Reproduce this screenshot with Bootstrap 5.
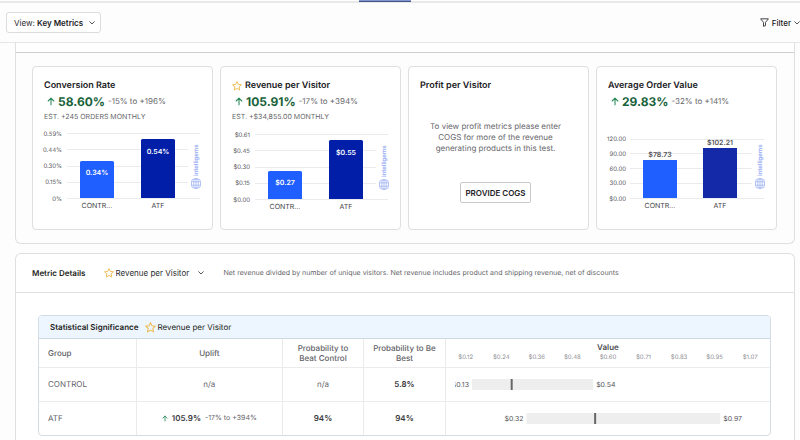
<!DOCTYPE html>
<html lang="en">
<head>
<meta charset="utf-8">
<meta name="viewport" content="width=device-width, initial-scale=1">
<title>Key Metrics</title>
<link href="https://cdn.jsdelivr.net/npm/bootstrap@5.3.0/dist/css/bootstrap.min.css" rel="stylesheet">
<style>
body{font-family:Inter,"Liberation Sans",sans-serif;font-size:8px;line-height:12px;color:#1d1d20;background:#fdfdfd;min-height:100vh;overflow-x:hidden;text-rendering:geometricPrecision}
.tab-strip{height:3px;border-bottom:2px solid #e9e9ea;padding-left:359px}
.tab-strip a{width:52px;height:2px;background:#8296cf;border-bottom:1px solid #43568c}
.toolbar{height:40px;border-bottom:1px solid #e6e6e7;padding-left:6px}
.view-btn{height:21px;width:95px;border:1px solid #dcdce0;border-radius:3px;background:#fff;padding:0 5px 0 7px;font-size:8px;line-height:12px;color:#2b2b2e;white-space:nowrap}
.view-btn b{font-weight:600;color:#1b1b1e}
.filter-btn{border:0;background:none;padding:0;font-size:8px;line-height:12px;color:#1b1b1e;font-weight:500;gap:3px}
.panels{padding:0 5px 0 15px}
.panel{border:1px solid #dfdfe1;background:#fff}
.summary{border-top:0;border-radius:0 0 6px 6px;background:#fdfdfd}
.summary-head{height:10px;background:#fff;border-bottom:1px solid #cfcfd1}
.summary-body{display:grid;grid-template-columns:repeat(4,minmax(0,1fr));gap:7px;padding:13px 17px 13px 16px}
.metric{border:1px solid #dfdfe1;border-radius:4px;background:#fff;height:164px}
.metric-text{padding:11px 11px 0;height:57px;white-space:nowrap}
.metric h2{font-size:9px;line-height:15px;font-weight:600;margin:0;color:#1b1b1e;gap:3px}
.uplift{line-height:17px;padding-left:3px;gap:3px;font-size:8px;color:#66666a}
.uplift strong{font-size:12px;font-weight:700;color:#17623a}
.est{font-size:7px;line-height:14px;color:#66666a}
.chart{width:100%;font-size:7px}
.chart .axis{fill:#55555a;text-anchor:end;font-size:6px}
.chart .cat{fill:#3f3f44;text-anchor:middle}
.chart .val{fill:#fff;text-anchor:middle;font-weight:600}
.chart .out{fill:#55555a}
.chart .wm{fill:#95aaf4;font-weight:600;font-size:6px}
.cogs-wrap{padding:24px 6px 0 0}
.cogs{font-size:8px;line-height:11px;color:#66666a}
.cogs-btn{border:1px solid #c9c9cc;border-radius:2px;background:#fff;height:21px;padding:0 4px;font-size:8px;line-height:12px;font-weight:600;color:#222226;margin-top:28px}
.details{margin-top:9px;border-bottom:0;border-radius:6px 6px 0 0;flex:1}
.details-head{height:39px;border-bottom:1px solid #dfdfe1;padding:0 16px;white-space:nowrap}
.details-head h2{font-size:8px;line-height:12px;font-weight:600;margin:0 18px 0 0}
.metric-select{appearance:none;border:0;background:none;padding:0;width:82px;font:inherit;color:#2b2b2e}
.details-note{font-size:7px;color:#66666a;margin-left:20px}
.sig{margin:22px 23px 0 22px;border:1px solid #d5dce3;border-radius:4px;overflow:hidden}
.sig-head{height:23px;background:#edf6fe;border-bottom:1px solid #cbdbe6;padding-left:11px}
.sig-head h3{font-size:8px;line-height:12px;font-weight:600;margin:0 6px 0 0}
.star-gap{margin-right:2px}
.sig-table{width:100%;table-layout:fixed;font-size:8px;color:#66666a}
.sig-table th{font-weight:500;line-height:10px;font-size:8px;color:#626267}
.sig-table th,.sig-table td{padding:0 9px;border-right:1px solid #ebebed;border-bottom:1px solid #ebebed;text-align:center;vertical-align:middle}
.sig-table tr>:last-child{border-right:0}
.sig-table tbody tr:last-child>*{border-bottom:0}
.sig-table tr>:first-child{text-align:left}
.sig-table thead tr{height:28px}
.sig-table tbody tr{height:34px}
.sig-table tbody th{font-weight:400}
.sig-table td b{font-weight:600;color:#3a3a3e}
.sig-table small{font-size:7px}
.sig-table thead th.value-col{padding:0 2px;font-weight:600;color:#505055}
.ticks{font-size:6px;font-weight:400;color:#8c8c91;padding-top:1px}
.ticks span{flex:1}
.range{width:100%;font-size:7px;fill:#55555a}
svg{display:block;flex-shrink:0}
</style>
<script src="https://cdn.jsdelivr.net/npm/bootstrap@5.3.0/dist/js/bootstrap.bundle.min.js"></script>
</head>
<body class="d-flex flex-column">
<svg width="0" height="0" class="position-absolute" aria-hidden="true">
  <defs>
    <symbol id="star" viewBox="0 0 12 12"><path d="M6 .7l1.600 3.400 3.700.4-2.800 2.500.8 3.800L6 8.900l-3.300 1.900.8-3.800L.7 4.500l3.700-.4z" fill="none" stroke="#edb94c" stroke-width="1.100" stroke-linejoin="round"/></symbol>
    <symbol id="up" viewBox="0 0 8 9"><path d="M4 7.800V1.200M1.200 4L4 1.200 6.800 4" fill="none" stroke="#2a8a5b" stroke-width="1.100" stroke-linecap="round" stroke-linejoin="round"/></symbol>
    <symbol id="chev" viewBox="0 0 6 4"><path d="M.7.7L3 3 5.300.7" fill="none" stroke="#55555a" stroke-width="1" stroke-linecap="round" stroke-linejoin="round"/></symbol>
    <symbol id="gem" viewBox="0 0 10 11"><g fill="none" stroke="#95aaf4" stroke-width=".7"><rect x=".5" y=".8" width="9" height="9.400" rx="3"/><rect x="2.800" y=".8" width="4.400" height="9.400" rx="2"/><path d="M.6 3.800h8.800M.6 7.200h8.800M5 .8v9.400"/></g></symbol>
  </defs>
</svg>
<nav class="tab-strip d-flex" aria-label="Sections"><a href="#" class="d-block" aria-label="Current tab"></a></nav>
<div class="toolbar d-flex align-items-center justify-content-between">
  <button class="view-btn d-flex align-items-center justify-content-between" type="button"><span>View: <b>Key Metrics</b></span><svg width="6" height="4"><use href="#chev"/></svg></button>
  <button class="filter-btn d-flex align-items-center" type="button"><svg width="9" height="9" viewBox="0 0 9 9"><path d="M.6.8h7.800L5.500 4.400v3.200l-2 .8v-4z" fill="none" stroke="#333338" stroke-width=".9" stroke-linejoin="round"/></svg><span>Filter</span><svg width="6" height="4"><use href="#chev"/></svg></button>
</div>
<main class="panels d-flex flex-column flex-grow-1">
  <section class="panel summary">
    <div class="summary-head"></div>
    <div class="summary-body">
      <article class="metric">
        <div class="metric-text">
          <h2>Conversion Rate</h2>
          <div class="uplift d-flex align-items-center"><svg width="8" height="9"><use href="#up"/></svg><strong>58.60%</strong><span>-15% to +196%</span></div>
          <div class="est">EST. +245 ORDERS MONTHLY</div>
        </div>
        <svg class="chart" viewBox="0 0 179 90" role="img" aria-label="Conversion rate by group">
          <path d="M34 9.500h133M34 25.500h121M34 42.500h121M34 58.500h121M34 74.500h133" stroke="#ebebed"/>
          <g class="axis"><text x="29" y="12">0.59%</text><text x="29" y="28">0.44%</text><text x="29" y="44">0.30%</text><text x="29" y="60">0.15%</text><text x="29" y="77">0%</text></g>
          <path d="M47 74V38.500a1.500 1.500 0 0 1 1.500-1.500h31a1.500 1.500 0 0 1 1.500 1.500V74z" fill="#1f5eff"/>
          <path d="M108 74V16.500a1.500 1.500 0 0 1 1.500-1.500h31a1.500 1.500 0 0 1 1.500 1.500V74z" fill="#001ea8"/>
          <text class="val" x="64" y="51">0.34%</text><text class="val" x="125" y="30">0.54%</text>
          <text class="cat" x="64" y="84">CONTR...</text><text class="cat" x="125" y="84">ATF</text>
          <text class="wm" transform="translate(165 52) rotate(-90)">intelligems</text><use href="#gem" x="158" y="54" width="10" height="11"/>
        </svg>
      </article>
      <article class="metric">
        <div class="metric-text">
          <h2 class="d-flex align-items-center"><svg width="10" height="10"><use href="#star"/></svg>Revenue per Visitor</h2>
          <div class="uplift d-flex align-items-center"><svg width="8" height="9"><use href="#up"/></svg><strong>105.91%</strong><span>-17% to +394%</span></div>
          <div class="est">EST. +$34,855.00 MONTHLY</div>
        </div>
        <svg class="chart" viewBox="0 0 179 90" role="img" aria-label="Revenue per visitor by group">
          <path d="M34 10.500h133M34 26.500h121M34 43.500h121M34 59.500h121M34 75.500h133" stroke="#ebebed"/>
          <g class="axis"><text x="29" y="13">$0.61</text><text x="29" y="29">$0.45</text><text x="29" y="45">$0.30</text><text x="29" y="61">$0.15</text><text x="29" y="78">$0.00</text></g>
          <path d="M47 75V48.500a1.500 1.500 0 0 1 1.500-1.500h31a1.500 1.500 0 0 1 1.500 1.500V75z" fill="#1f5eff"/>
          <path d="M108 75V17.500a1.500 1.500 0 0 1 1.500-1.500h31a1.500 1.500 0 0 1 1.500 1.500V75z" fill="#001ea8"/>
          <text class="val" x="64" y="61">$0.27</text><text class="val" x="125" y="31">$0.55</text>
          <text class="cat" x="64" y="85">CONTR...</text><text class="cat" x="125" y="85">ATF</text>
          <text class="wm" transform="translate(165 53) rotate(-90)">intelligems</text><use href="#gem" x="158" y="55" width="10" height="11"/>
        </svg>
      </article>
      <article class="metric d-flex flex-column">
        <div class="metric-text pb-1 h-auto"><h2>Profit per Visitor</h2></div>
        <div class="cogs-wrap text-center">
          <p class="cogs mb-0">To view profit metrics please enter<br>COGS for more of the revenue<br>generating products in this test.</p>
          <button class="cogs-btn" type="button">PROVIDE COGS</button>
        </div>
      </article>
      <article class="metric">
        <div class="metric-text">
          <h2>Average Order Value</h2>
          <div class="uplift d-flex align-items-center"><svg width="8" height="9"><use href="#up"/></svg><strong>29.83%</strong><span>-32% to +141%</span></div>
        </div>
        <svg class="chart" viewBox="0 0 179 90" role="img" aria-label="Average order value by group">
          <path d="M33 15.500h134M33 29.500h122M33 44.500h122M33 59.500h122M33 74.500h134" stroke="#ebebed"/>
          <g class="axis"><text x="29" y="17">120.00</text><text x="29" y="32">90.00</text><text x="29" y="47">60.00</text><text x="29" y="61">30.00</text><text x="29" y="77">$0.00</text></g>
          <path d="M46 74V36h34v38z" fill="#1f5eff"/><path d="M106 74V24h34v50z" fill="#1429a8"/>
          <text class="val out" x="63" y="33">$78.73</text><text class="val out" x="123" y="21">$102.21</text>
          <text class="cat" x="63" y="84">CONTR...</text><text class="cat" x="123" y="84">ATF</text>
          <text class="wm" transform="translate(165 52) rotate(-90)">intelligems</text><use href="#gem" x="158" y="54" width="10" height="11"/>
        </svg>
      </article>
    </div>
  </section>
  <section class="panel details">
    <div class="details-head d-flex align-items-center">
      <h2>Metric Details</h2>
      <svg class="star-gap" width="10" height="10"><use href="#star"/></svg>
      <select class="metric-select" aria-label="Metric"><option>Revenue per Visitor</option></select>
      <svg width="6" height="4"><use href="#chev"/></svg>
      <span class="details-note">Net revenue divided by number of unique visitors. Net revenue includes product and shipping revenue, net of discounts</span>
    </div>
    <div class="sig">
      <div class="sig-head d-flex align-items-center"><h3>Statistical Significance</h3><svg class="star-gap" width="11" height="11"><use href="#star"/></svg><span>Revenue per Visitor</span></div>
      <table class="sig-table">
        <colgroup><col style="width:13.300%"><col style="width:20%"><col style="width:11.100%"><col style="width:11.200%"><col></colgroup>
        <thead><tr><th scope="col">Group</th><th scope="col">Uplift</th><th scope="col">Probability to<br>Beat Control</th><th scope="col">Probability to Be<br>Best</th>
          <th scope="col" class="value-col">Value<div class="ticks d-flex"><span>$0.12</span><span>$0.24</span><span>$0.36</span><span>$0.48</span><span>$0.60</span><span>$0.71</span><span>$0.83</span><span>$0.95</span><span>$1.07</span></div></th></tr></thead>
        <tbody>
          <tr><th scope="row">CONTROL</th><td>n/a</td><td>n/a</td><td><b>5.8%</b></td>
            <td><svg class="range" viewBox="0 0 308 14" role="img" aria-label="$0.13 to $0.54"><path d="M17 2h122v11H17z" fill="#eee"/><path d="M56 2h2v11h-2z" fill="#666"/><text x="14" y="10" text-anchor="end">$0.13</text><text x="142" y="10">$0.54</text></svg></td></tr>
          <tr><th scope="row">ATF</th><td><span class="d-flex align-items-center justify-content-center gap-1"><svg width="6" height="7"><use href="#up"/></svg><b>105.9%</b><small>-17% to +394%</small></span></td><td><b>94%</b></td><td><b>94%</b></td>
            <td><svg class="range" viewBox="0 0 308 14" role="img" aria-label="$0.32 to $0.97"><path d="M72 2h195v11H72z" fill="#eee"/><path d="M140 2h2v11h-2z" fill="#666"/><text x="69" y="10" text-anchor="end">$0.32</text><text x="270" y="10">$0.97</text></svg></td></tr>
        </tbody>
      </table>
    </div>
  </section>
</main>
</body>
</html>
